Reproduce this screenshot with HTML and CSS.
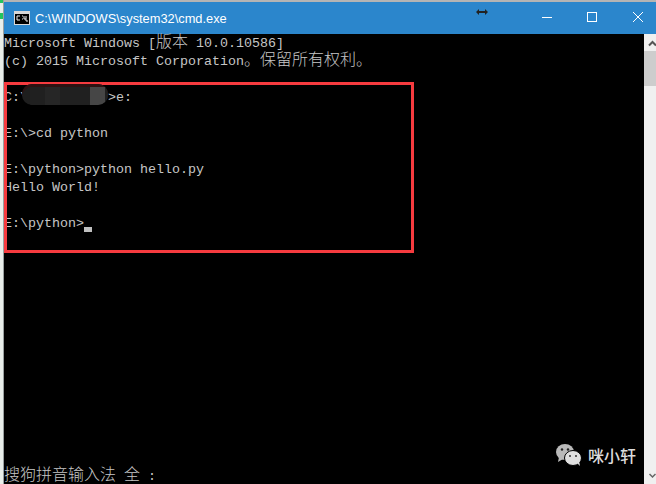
FILE: index.html
```html
<!DOCTYPE html>
<html lang="zh">
<head>
<meta charset="utf-8">
<title>cmd.exe</title>
<link rel="stylesheet" href="styles.css">
</head>
<body>
<div class="desktop-edge"><span class="green g1"></span><span class="green g2"></span></div>
<main class="window">
  <header class="titlebar">
    <svg class="app-icon" width="16" height="14" viewBox="0 0 16 14">
      <rect x="0" y="0" width="16" height="14" fill="#d8d8d8"/>
      <rect x="1" y="3" width="14" height="10" fill="#000"/>
      <path d="M3 5h3M3 5v4M3 9h3M8 5h1M8 8h1M10 5v3h2M12 5v5M12 10h2" stroke="#eee" stroke-width="1" fill="none"/>
    </svg>
    <span class="title">C:\WINDOWS\system32\cmd.exe</span>
    <svg class="resize-cursor" width="12" height="8" viewBox="0 0 12 8"><path d="M0 4l3-3v2h6V1l3 3-3 3V5H3v2z" fill="#222"/></svg>
    <div class="controls">
      <svg width="12" height="12" viewBox="0 0 12 12"><path d="M2 6.500h10" stroke="#fff" stroke-width="1"/></svg>
      <svg width="12" height="12" viewBox="0 0 12 12"><rect x="1.500" y="1.500" width="9" height="9" fill="none" stroke="#fff"/></svg>
      <svg width="12" height="12" viewBox="0 0 12 12"><path d="M1 1l10 10M11 1L1 11" stroke="#fff" stroke-width="1"/></svg>
    </div>
  </header>
  <div class="body">
    <section class="console">
<pre class="lines">Microsoft Windows [<span class="cjk">版本</span> 10.0.10586]
(c) 2015 Microsoft Corporation<span class="cjk">。保留所有权利。</span>

C:\          >e:

E:\>cd python

E:\python>python hello.py
Hello World!

E:\python><span class="caret"></span></pre>
      <pre class="ime"><span class="cjk">搜狗拼音输入法</span> <span class="cjk">全</span> :</pre>
      <div class="highlight"></div>
      <div class="blur"><i></i><i></i><i></i><i></i><i class="light"></i><i></i></div>
      <div class="watermark">
        <svg width="28" height="24" viewBox="0 0 28 24">
          <ellipse cx="10" cy="9" rx="9" ry="8" fill="#b9b9b9"/>
          <path d="M4 14l-1 5 5-3z" fill="#b9b9b9"/>
          <circle cx="7" cy="6.500" r="1.200" fill="#222"/><circle cx="13" cy="6.500" r="1.200" fill="#222"/>
          <ellipse cx="18" cy="15" rx="8.500" ry="7.500" fill="#e0e0e0" stroke="#000"/>
          <path d="M22 20l3 3-1-5z" fill="#e0e0e0"/>
          <circle cx="15" cy="13" r="1" fill="#333"/><circle cx="21" cy="13" r="1" fill="#333"/>
        </svg>
        <span class="wm-text">咪小轩</span>
      </div>
    </section>
    <aside class="scrollbar">
      <svg width="12" height="17" viewBox="0 0 12 17"><path d="M5 11.500l3.500-3.500 3.500 3.500" stroke="#555" stroke-width="2" fill="none"/></svg>
      <div class="thumb"></div>
      <div class="track"></div>
      <svg width="12" height="16" viewBox="0 0 12 16"><path d="M5.500 6l3 3 3-3" stroke="#666" stroke-width="1.500" fill="none"/></svg>
    </aside>
  </div>
</main>
</body>
</html>
```

FILE: styles.css
```css
* { box-sizing: border-box; }
html, body { margin: 0; height: 100%; }
body {
  display: flex;
  width: 656px;
  height: 484px;
  overflow: hidden;
  background: #b4b4b4;
  padding-top: 2px;
}
.desktop-edge {
  width: 4px;
  height: 484px;
  margin-top: -2px;
  background: #e9eeea;
  border-right: 1px solid #9aa0a0;
  display: flex;
  flex-direction: column;
}
.green { display: block; width: 3px; background: #22c55e; }
.g1 { height: 3px; }
.g2 { height: 6px; margin-top: 10px; }
.window {
  flex: 1;
  display: flex;
  flex-direction: column;
  min-width: 0;
}
.titlebar {
  height: 32px;
  flex: none;
  background: #2b86cc;
  display: flex;
  align-items: center;
  padding-left: 10px;
  position: relative;
}
.app-icon { flex: none; }
.title {
  margin-left: 5px;
  color: #fff;
  font: 12.830px "Liberation Sans", Arial, sans-serif;
}
.resize-cursor { position: absolute; left: 472px; top: 6px; }
.controls {
  margin-left: auto;
  display: flex;
  gap: 34px;
  padding-right: 12px;
  margin-top: -2px;
}
.controls svg { display: block; }
.body { flex: 1; display: flex; min-height: 0; }
.console {
  flex: 1;
  background: #000;
  position: relative;
  display: flex;
  flex-direction: column;
  min-width: 0;
}
pre {
  margin: 0;
  color: #c6c6c6;
  font: 13.333px/18px "Liberation Mono", "Noto Sans CJK SC", monospace;
  white-space: pre;
}
.lines { padding-top: 1px; }
.ime { margin-top: auto; margin-bottom: -2px; }
.cjk { font: 300 16px/0 "Noto Sans CJK SC", sans-serif; letter-spacing: 0; }
.caret {
  display: inline-block;
  width: 8px;
  height: 5px;
  background: #c0c0c0;
  vertical-align: -5px;
}
.highlight {
  position: absolute;
  left: 0;
  top: 48px;
  width: 410px;
  height: 171px;
  border: 3px solid #f63b3f;
}
.blur {
  position: absolute;
  left: 18px;
  top: 50px;
  width: 86px;
  height: 21px;
  border-radius: 10px;
  overflow: hidden;
  display: flex;
  padding-left: 8px;
  background: #1e1e1e;
  box-shadow: inset 0 3px 0 #2d1212;
}
.blur i { width: 15px; flex: none; background: #202020; margin-top: 3px; }
.blur i:nth-child(2) { background: #262626; }
.blur i.light { background: #464646; }
.watermark {
  position: absolute;
  right: 8px;
  bottom: 17px;
  display: flex;
  align-items: center;
  gap: 5px;
}
.wm-text {
  color: #dcdcdc;
  font: 500 16px/24px "Noto Sans CJK SC", sans-serif;
  letter-spacing: 0;
}
.scrollbar {
  width: 12px;
  flex: none;
  background: #f0f0f0;
  display: flex;
  flex-direction: column;
}
.scrollbar svg { display: block; flex: none; }
.thumb { height: 35px; background: #cdcdcd; flex: none; }
.track { flex: 1; }
```
